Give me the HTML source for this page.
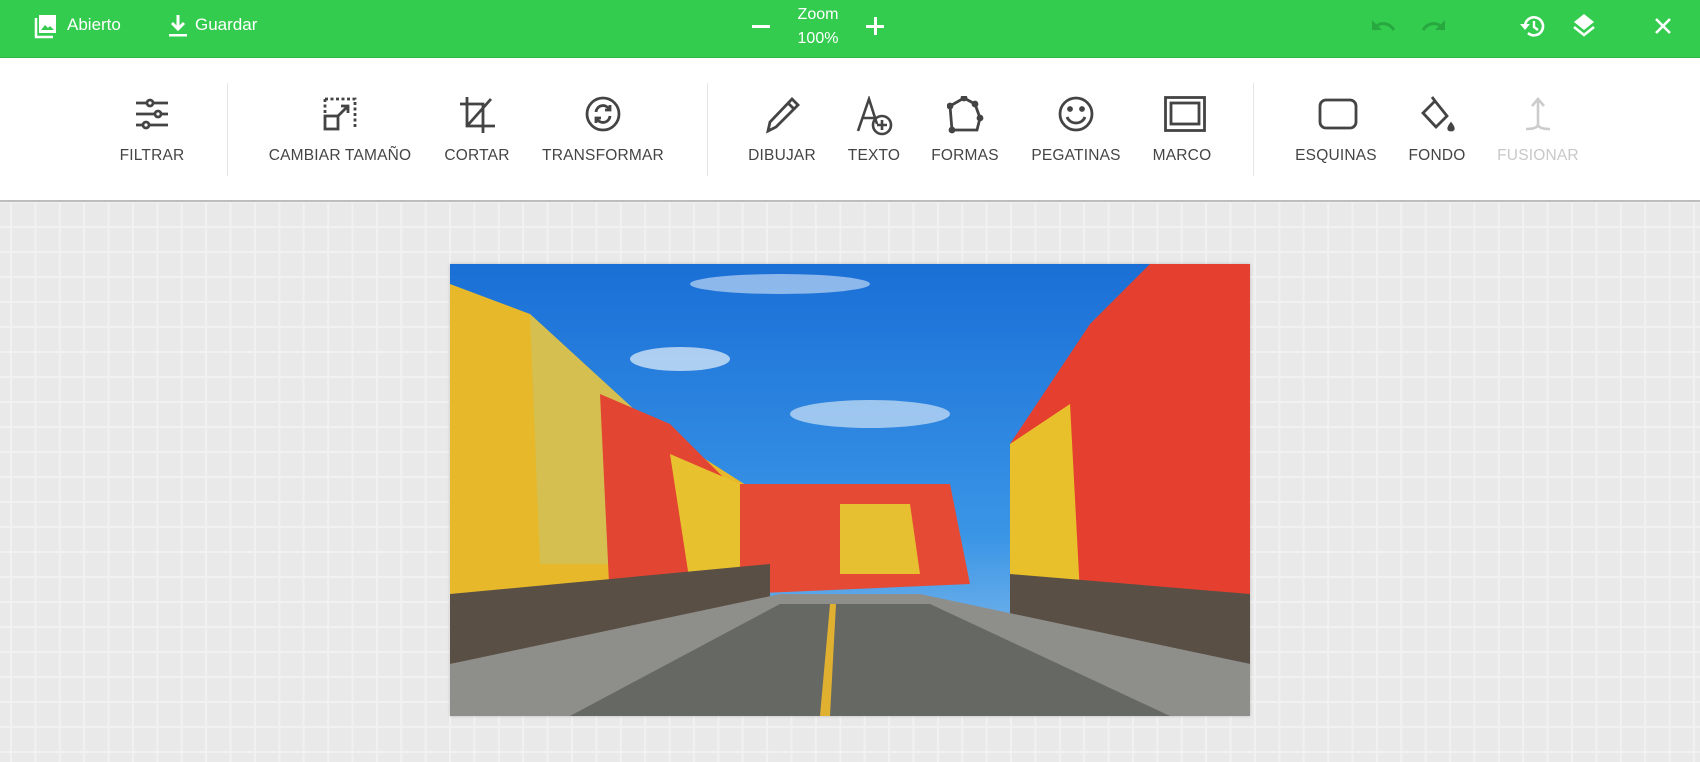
<!DOCTYPE html>
<html><head><meta charset="utf-8"><style>
*{margin:0;padding:0;box-sizing:border-box}
body{width:1700px;height:762px;overflow:hidden;font-family:"Liberation Sans",sans-serif;background:#ebebeb;position:relative}
.top{position:absolute;left:0;top:0;width:1700px;height:57px;background:#34cc4f;color:#fff}
.top .t{position:absolute;font-size:17px;top:15px}
.tb{position:absolute;left:0;top:57px;width:1700px;height:145px;background:#fff;border-bottom:2px solid #bdbdbd;border-top:1px solid #2fb848}
.it{position:absolute;top:0;width:160px;margin-left:-80px;text-align:center}
.it svg{position:absolute;left:62px;top:38px}
.it span{position:absolute;left:0;width:160px;top:89px;font-size:15.5px;color:#444;letter-spacing:0.2px}
.sep{position:absolute;top:25px;width:1px;height:93px;background:#e6e6e6}
.bg{position:absolute;left:0;top:202px;width:1700px;height:560px;background-color:#e9e9e9;
background-image:linear-gradient(90deg,#f1f1f1 2px,transparent 2px),linear-gradient(#f1f1f1 2px,transparent 2px);
background-size:24.4px 25px;background-position:10px 24px}
.photo{position:absolute;left:450px;top:264px;width:800px;height:452px;box-shadow:0 0 3px rgba(0,0,0,.2)}
</style></head><body>
<div class="top">
<svg style="position:absolute;left:33px;top:13px" width="24" height="26" viewBox="0 0 24 26"><path d="M3 5v19h17" stroke="#fff" stroke-width="2.5" fill="none"/><rect x="6" y="2" width="17" height="18" fill="#fff"/><path d="M8 17l4-5 3 3 2-2 4 4z" fill="#34cc4f"/></svg>
<div class="t" style="left:67px">Abierto</div>
<svg style="position:absolute;left:168px;top:13px" width="20" height="26" viewBox="0 0 20 26"><path d="M10 2v13M4 10l6 6 6-6" stroke="#fff" stroke-width="3" fill="none"/><rect x="1" y="21" width="18" height="2.5" fill="#fff"/></svg>
<div class="t" style="left:195px">Guardar</div>
<div style="position:absolute;left:752px;top:25px;width:18px;height:2.5px;background:#fff"></div>
<div style="position:absolute;left:778px;top:3px;width:80px;text-align:center;font-size:16px;line-height:24px">Zoom<br>100%</div>
<div style="position:absolute;left:866px;top:25px;width:18px;height:2.5px;background:#fff"></div>
<div style="position:absolute;left:874px;top:17px;width:2.5px;height:18px;background:#fff"></div>
<svg style="position:absolute;left:1370px;top:16px" width="28" height="20" viewBox="0 0 28 20"><path d="M4 14c3-8 14-9 20 0" stroke="#27a93f" stroke-width="3" fill="none"/><path d="M2 4v10h10z" fill="#27a93f"/></svg>
<svg style="position:absolute;left:1419px;top:16px" width="28" height="20" viewBox="0 0 28 20"><path d="M24 14c-3-8-14-9-20 0" stroke="#27a93f" stroke-width="3" fill="none"/><path d="M26 4v10h-10z" fill="#27a93f"/></svg>
<svg style="position:absolute;left:1519px;top:12px" width="28" height="28" viewBox="0 0 28 28"><path d="M6 14a9 9 0 1 1 3 7" stroke="#fff" stroke-width="2.6" fill="none"/><path d="M1 12h10l-5 6z" fill="#fff"/><path d="M15 9v6l4 3" stroke="#fff" stroke-width="2.4" fill="none"/></svg>
<svg style="position:absolute;left:1571px;top:12px" width="26" height="28" viewBox="0 0 26 28"><path d="M13 2l10 8-10 8-10-8z" fill="#fff"/><path d="M3 15l10 8 10-8" stroke="#fff" stroke-width="2.6" fill="none"/></svg>
<svg style="position:absolute;left:1654px;top:17px" width="18" height="18" viewBox="0 0 18 18"><path d="M2 2l14 14M16 2L2 16" stroke="#fff" stroke-width="2.6"/></svg>
</div>
<div class="tb">
<div class="sep" style="left:227px"></div><div class="sep" style="left:707px"></div><div class="sep" style="left:1253px"></div>
<div class="it" style="left:152px"><svg width="36" height="36" viewBox="0 0 36 36" fill="none" stroke="#444" stroke-width="2.8"><path d="M2 7h32M2 18h32M2 29h32"/><circle cx="16" cy="7" r="3" fill="#fff"/><circle cx="24" cy="18" r="3" fill="#fff"/><circle cx="12" cy="29" r="3" fill="#fff"/></svg><span>FILTRAR</span></div>
<div class="it" style="left:340px"><svg width="36" height="36" viewBox="0 0 36 36" fill="none" stroke="#444" stroke-width="2.8"><path d="M3 3h30v30" stroke-dasharray="3 2.5"/><path d="M3 3v14" stroke-dasharray="3 2.5"/><rect x="3" y="20" width="13" height="13"/><path d="M15 21l11-11M19 10h7v7"/></svg><span>CAMBIAR TAMAÑO</span></div>
<div class="it" style="left:477px"><svg width="36" height="38" viewBox="0 0 36 38" fill="none" stroke="#444" stroke-width="2.8"><path d="M8 1v29h28M1 8h23v29M32 3L8 30"/></svg><span>CORTAR</span></div>
<div class="it" style="left:603px"><svg width="36" height="36" viewBox="0 0 36 36" fill="none" stroke="#444" stroke-width="2.8"><circle cx="18" cy="18" r="16"/><path d="M11 16a7 7 0 0 1 13-3M25 20a7 7 0 0 1-13 3"/><path d="M25 9v5h-5M11 27v-5h5"/></svg><span>TRANSFORMAR</span></div>
<div class="it" style="left:782px"><svg width="36" height="38" viewBox="0 0 36 38" fill="none" stroke="#444" stroke-width="2.8"><path d="M4 35l2-9L28 3l6 6-22 22z M24 7l6 6"/></svg><span>DIBUJAR</span></div>
<div class="it" style="left:874px"><svg width="38" height="40" viewBox="0 0 38 40" fill="none" stroke="#444" stroke-width="2.6"><path d="M2 35L13 3l8 25M6 22h12"/><circle cx="26" cy="29" r="9"/><path d="M26 24v10M21 29h10"/></svg><span>TEXTO</span></div>
<div class="it" style="left:965px"><svg width="38" height="38" viewBox="0 0 38 38" fill="none" stroke="#444" stroke-width="2.8"><path d="M17 2l11 6 5 14-3 12H5L3 10z"/><circle cx="17" cy="2" r="2" fill="#444"/><circle cx="28" cy="8" r="2" fill="#444"/><circle cx="33" cy="22" r="2" fill="#444"/><circle cx="5" cy="34" r="2" fill="#444"/><circle cx="3" cy="10" r="2" fill="#444"/></svg><span>FORMAS</span></div>
<div class="it" style="left:1076px"><svg width="36" height="36" viewBox="0 0 36 36" fill="none" stroke="#444" stroke-width="2.8"><circle cx="18" cy="18" r="16"/><circle cx="12" cy="13" r="1.5" fill="#444"/><circle cx="24" cy="13" r="1.5" fill="#444"/><path d="M9 21c3 8 15 8 18 0"/></svg><span>PEGATINAS</span></div>
<div class="it" style="left:1182px"><svg width="42" height="36" viewBox="0 0 42 36" fill="none" stroke="#444" stroke-width="2.8"><rect x="1.5" y="1.5" width="39" height="33"/><rect x="7" y="7" width="28" height="21"/></svg><span>MARCO</span></div>
<div class="it" style="left:1336px"><svg width="40" height="36" viewBox="0 0 40 36" fill="none" stroke="#444" stroke-width="2.8"><rect x="2" y="4" width="36" height="28" rx="6"/></svg><span>ESQUINAS</span></div>
<div class="it" style="left:1437px"><svg width="38" height="40" viewBox="0 0 38 40" fill="none" stroke="#444" stroke-width="2.8"><path d="M13 1l3 4M16 5L28 20 17 31 4 17z"/><path d="M32 28c-3 4-3 6 0 6s3-2 0-6z" fill="#444"/></svg><span>FONDO</span></div>
<div class="it" style="left:1538px"><svg width="36" height="40" viewBox="0 0 36 40" fill="none" stroke="#ccc" stroke-width="2.6"><path d="M18 4v24c0 4-6 5-12 5M18 28c0 4 6 5 12 5M12 10l6-7 6 7"/></svg><span style="color:#c8c8c8">FUSIONAR</span></div>
</div>
<div class="bg"></div>
<svg class="photo" viewBox="0 0 800 452" preserveAspectRatio="none">
<defs><linearGradient id="sky" x1="0" y1="0" x2="0" y2="1"><stop offset="0" stop-color="#1a6fd6"/><stop offset="0.6" stop-color="#3a95e6"/><stop offset="1" stop-color="#9cc8ee"/></linearGradient></defs>
<rect width="800" height="452" fill="url(#sky)"/>
<ellipse cx="230" cy="95" rx="50" ry="12" fill="#cfe3f6" opacity=".8"/>
<ellipse cx="420" cy="150" rx="80" ry="14" fill="#cfe3f6" opacity=".7"/>
<ellipse cx="330" cy="20" rx="90" ry="10" fill="#d8e8f8" opacity=".6"/>
<polygon points="0,20 80,50 200,160 310,230 320,420 0,430" fill="#e6b82a"/>
<polygon points="80,50 200,160 180,300 90,300" fill="#d5bf50"/>
<polygon points="150,130 220,160 300,240 310,330 160,340" fill="#e24532"/>
<polygon points="220,190 290,220 300,320 240,320" fill="#e8c22e"/>
<polygon points="290,220 500,220 520,320 290,330" fill="#e44a34"/>
<polygon points="390,240 460,240 470,310 390,310" fill="#e6c030"/>
<polygon points="800,0 700,0 640,60 580,150 560,180 560,340 800,370" fill="#e5402f"/>
<polygon points="560,180 620,140 630,330 560,330" fill="#e8c02c"/>
<polygon points="0,330 320,300 320,340 0,400" fill="#5a4f45"/>
<polygon points="560,310 800,330 800,400 560,350" fill="#5a4f45"/>
<polygon points="0,400 330,330 470,330 800,400 800,452 0,452" fill="#8e8e8a"/>
<polygon points="120,452 330,340 480,340 720,452" fill="#666864"/>
<polygon points="380,340 386,340 380,452 370,452" fill="#e0b030"/>
</svg>
</body></html>
